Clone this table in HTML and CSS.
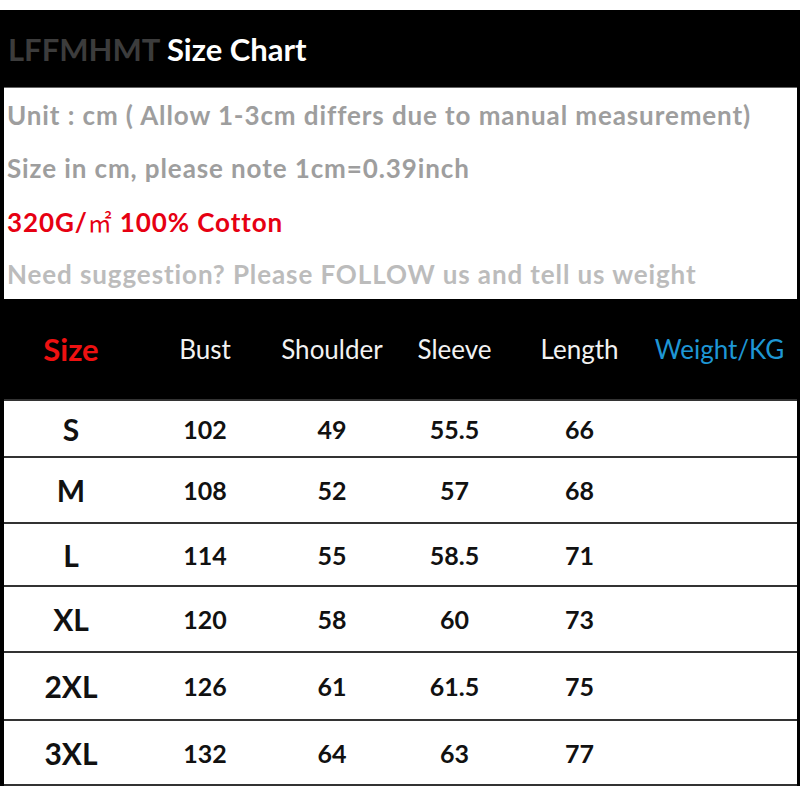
FILE: index.html
```html
<!DOCTYPE html>
<html>
<head>
<meta charset="utf-8">
<link rel="stylesheet" href="styles.css">
</head>
<body>
<div class="chart">
  <div class="title"><span class="title-text"><span class="brand">LFFMHMT</span> <span class="title-main">Size Chart</span></span></div>
  <div class="info">
    <p class="note">Unit : cm ( Allow 1-3cm differs due to manual measurement)</p>
    <p class="note">Size in cm, please note 1cm=0.39inch</p>
    <p class="note red">320G/<span class="sqm">㎡</span> 100% Cotton</p>
    <p class="note light">Need suggestion? Please FOLLOW us and tell us weight</p>
  </div>
  <div class="thead">
    <div class="th size">Size</div>
    <div class="th">Bust</div>
    <div class="th">Shoulder</div>
    <div class="th">Sleeve</div>
    <div class="th">Length</div>
    <div class="th weight">Weight/KG</div>
  </div>
  <div class="tbody">
    <div class="row"><div class="cell label">S</div><div class="cell">102</div><div class="cell">49</div><div class="cell">55.5</div><div class="cell">66</div><div class="cell"></div></div>
    <div class="row"><div class="cell label">M</div><div class="cell">108</div><div class="cell">52</div><div class="cell">57</div><div class="cell">68</div><div class="cell"></div></div>
    <div class="row"><div class="cell label">L</div><div class="cell">114</div><div class="cell">55</div><div class="cell">58.5</div><div class="cell">71</div><div class="cell"></div></div>
    <div class="row"><div class="cell label">XL</div><div class="cell">120</div><div class="cell">58</div><div class="cell">60</div><div class="cell">73</div><div class="cell"></div></div>
    <div class="row"><div class="cell label">2XL</div><div class="cell">126</div><div class="cell">61</div><div class="cell">61.5</div><div class="cell">75</div><div class="cell"></div></div>
    <div class="row last"><div class="cell label">3XL</div><div class="cell">132</div><div class="cell">64</div><div class="cell">63</div><div class="cell">77</div><div class="cell"></div></div>
  </div>
</div>
</body>
</html>
```

FILE: styles.css
```css
html, body {
  margin: 0;
  padding: 0;
  background: #fff;
}
body {
  font-family: Lato, "Noto Sans", "DejaVu Sans", sans-serif;
}
.chart {
  margin-top: 10px;
  width: 800px;
  box-sizing: border-box;
  border-left: 4px solid #000;
  border-right: 3px solid #000;
}
.title {
  background: #000;
  height: 78px;
  box-sizing: border-box;
  padding-left: 4px;
  display: flex;
  align-items: center;
  font-weight: 700;
  font-size: 31px;
  border-bottom: 1px solid #666;
}
.title-text { white-space: pre; }
.brand { color: #3c3c3c; }
.title-main { color: #fff; }
.info {
  height: 211px;
  box-sizing: border-box;
  padding-top: 1px;
  background: #fff;
}
.note {
  margin: 0;
  height: 53px;
  line-height: 53px;
  padding-left: 3px;
  font-size: 26px;
  letter-spacing: 0.9px;
  font-weight: 700;
  color: #9e9e9e;
  white-space: nowrap;
}
.note.red { color: #e60012; }
.note.light { color: #bcbcbc; }
.sqm {
  font-family: "Noto Sans CJK SC", "DejaVu Sans", sans-serif;
  font-size: 24px;
  font-weight: 400;
}
.thead, .row {
  display: grid;
  grid-template-columns: 134px 134px 120px 125px 125px 155px;
}
.thead {
  background: #000;
  height: 100px;
  align-items: center;
}
.th {
  text-align: center;
  color: #f2f2f2;
  font-size: 26px;
}
.th.size {
  color: #ee1111;
  font-weight: 700;
  font-size: 31px;
}
.th.weight { color: #1e96d4; }
.tbody {
  display: grid;
  grid-template-rows: 57px 66px 63px 66px 68px 67px;
}
.row {
  border-top: 2px solid #333;
  align-items: center;
}
.row.last { border-bottom: 2px solid #333; }
.cell {
  text-align: center;
  font-weight: 700;
  font-size: 25px;
  color: #111;
}
.cell.label { font-size: 30px; }
```
